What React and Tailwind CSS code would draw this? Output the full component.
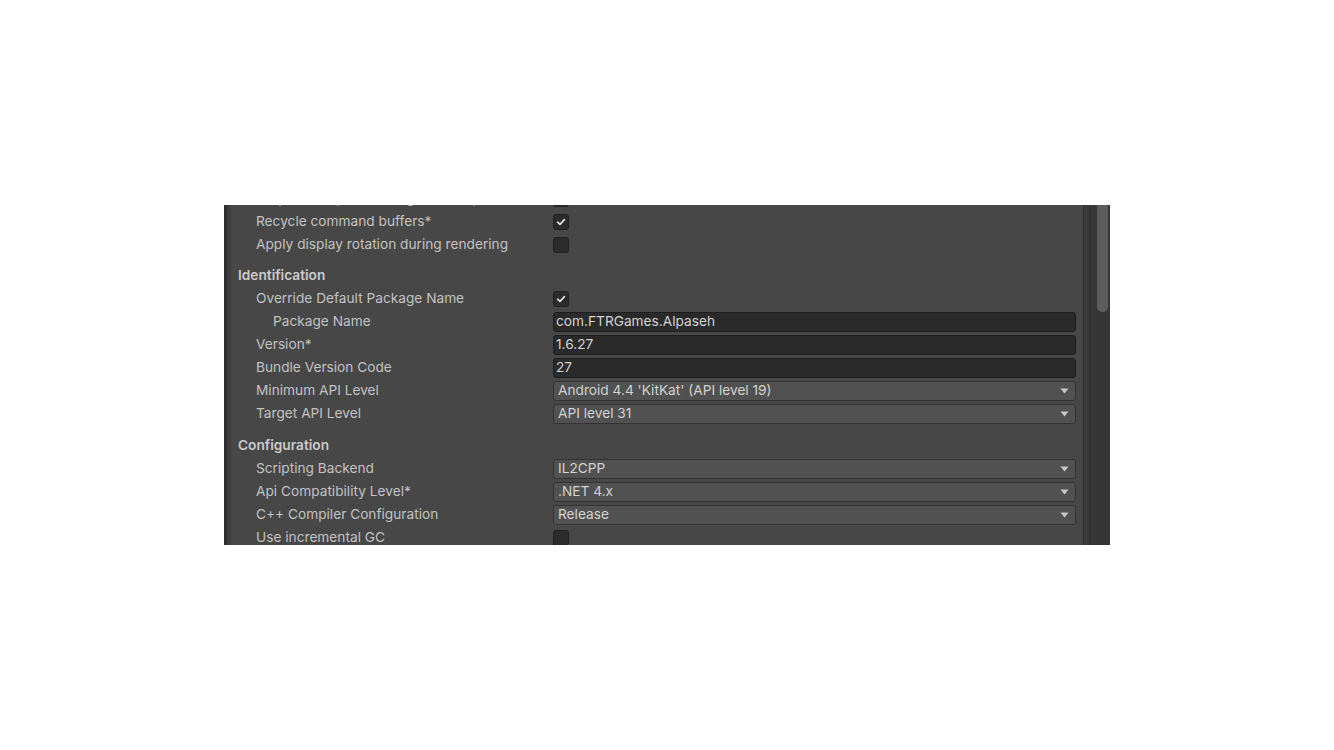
import React from "react";

const font = { fontFamily: "Inter, 'Noto Sans', sans-serif" };

const Check = () => (
  <svg width="10" height="10" viewBox="0 0 10 10" fill="none">
    <path d="M1.6 5.2 L4 7.4 L8.4 2.6" stroke="#e4e4e4" strokeWidth="1.6" strokeLinecap="round" strokeLinejoin="round" />
  </svg>
);

const Checkbox = ({ checked }) => (
  <div className="w-4 h-4 rounded-[3px] bg-[#2b2b2b] border border-[#212121] flex items-center justify-center">
    {checked && <Check />}
  </div>
);

const TextField = ({ value }) => (
  <div className="h-5 rounded-[3px] bg-[#2a2a2a] border border-[#1e1e1e] flex items-center pl-[2px] text-[#d2d2d2]">
    {value}
  </div>
);

const Dropdown = ({ value }) => (
  <div className="h-5 rounded-[3px] bg-[#515151] border border-[#333333] flex items-center justify-between pl-[4px] pr-[6px] text-[#d2d2d2]">
    <span>{value}</span>
    <svg width="9" height="6" viewBox="0 0 9 6">
      <path d="M0.5 0.5 L8.5 0.5 L4.5 5.5 Z" fill="#c8c8c8" />
    </svg>
  </div>
);

const Row = ({ label, indent = 25, children, className = "" }) => (
  <div className={`flex items-center h-[23px] shrink-0 ${className}`}>
    <div className="w-[322px] shrink-0 whitespace-nowrap text-[#c2c2c2]" style={{ paddingLeft: indent }}>
      {label}
    </div>
    <div className="flex-1 pr-[7px]">{children}</div>
  </div>
);

const Header = ({ title, className = "mt-2" }) => (
  <div className={`h-[23px] shrink-0 flex items-center pl-[7px] font-semibold text-[#cbcbcb] ${className}`}>{title}</div>
);

export default function App() {
  return (
    <div className="w-[1334px] h-[750px] bg-white pt-[205px] pl-[224px]" style={font}>
      <div className="w-[886px] h-[340px] bg-[#474747] flex overflow-hidden text-[13.7px]">
        {/* left edge */}
        <div className="w-[3px] bg-[#2f2f2f] shrink-0" />
        <div className="w-[4px] bg-[#3d3d3d] shrink-0" />

        {/* content */}
        <div className="flex-1 flex flex-col">
          <Row label="Acquire swapchain image late as possible*" className="-mt-[18px]">
            <Checkbox />
          </Row>
          <Row label="Recycle command buffers*">
            <Checkbox checked />
          </Row>
          <Row label="Apply display rotation during rendering">
            <Checkbox />
          </Row>

          <Header title="Identification" />
          <Row label="Override Default Package Name">
            <Checkbox checked />
          </Row>
          <Row label="Package Name" indent={42}>
            <TextField value="com.FTRGames.Alpaseh" />
          </Row>
          <Row label="Version*">
            <TextField value="1.6.27" />
          </Row>
          <Row label="Bundle Version Code">
            <TextField value="27" />
          </Row>
          <Row label="Minimum API Level">
            <Dropdown value="Android 4.4 'KitKat' (API level 19)" />
          </Row>
          <Row label="Target API Level">
            <Dropdown value="API level 31" />
          </Row>

          <Header title="Configuration" className="mt-[9px]" />
          <Row label="Scripting Backend">
            <Dropdown value="IL2CPP" />
          </Row>
          <Row label="Api Compatibility Level*">
            <Dropdown value=".NET 4.x" />
          </Row>
          <Row label="C++ Compiler Configuration">
            <Dropdown value="Release" />
          </Row>
          <Row label="Use incremental GC">
            <Checkbox />
          </Row>
        </div>

        {/* scrollbar */}
        <div className="w-[1px] bg-[#2e2e2e] shrink-0" />
        <div className="w-[5px] bg-[#3b3b3b] shrink-0" />
        <div className="w-[1px] bg-[#2c2c2c] shrink-0" />
        <div className="w-[20px] bg-[#363636] shrink-0 flex pl-[7px] pr-[2px]">
          <div className="flex-1 h-[107px] bg-[#5c5c5c] rounded-b-[6px]" />
        </div>
      </div>
    </div>
  );
}
